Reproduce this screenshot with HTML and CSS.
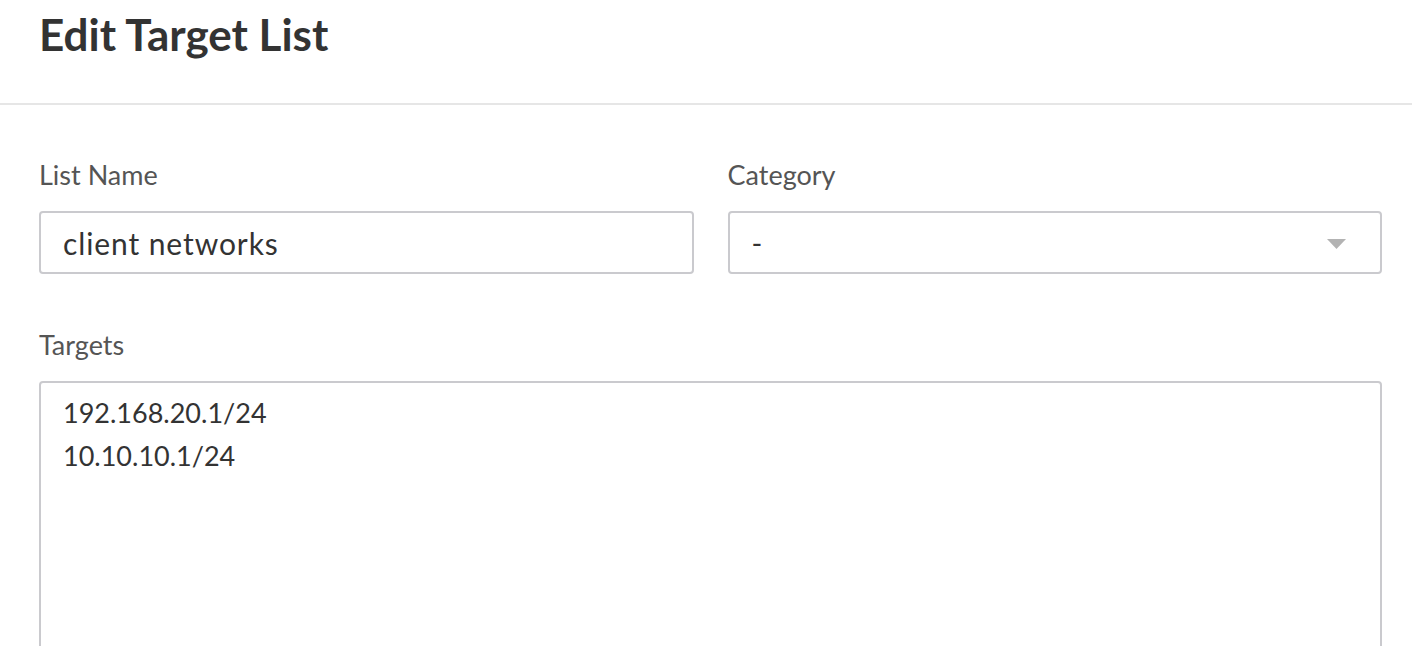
FILE: index.html
```html
<!DOCTYPE html>
<html lang="en">
<head>
<meta charset="utf-8">
<title>Edit Target List</title>
<link rel="stylesheet" href="styles.css">
</head>
<body>
<header class="page-header">
  <h1 class="page-title">Edit Target List</h1>
</header>
<form class="form">
  <div class="form-row">
    <div class="form-group">
      <label class="form-label" for="list-name">List Name</label>
      <input class="form-input" id="list-name" type="text" value="client networks">
    </div>
    <div class="form-group">
      <label class="form-label" for="category">Category</label>
      <div class="select" id="category">
        <span class="select-value">-</span>
        <svg class="select-arrow" width="19" height="10" viewBox="0 0 19 10"><path d="M0 0 H19 L9.5 10 Z" fill="#b3b3b3"/></svg>
      </div>
    </div>
  </div>
  <div class="form-group">
    <label class="form-label" for="targets">Targets</label>
    <textarea class="form-textarea" id="targets">192.168.20.1/24
10.10.10.1/24</textarea>
  </div>
</form>
</body>
</html>
```

FILE: styles.css
```css
* { box-sizing: border-box; }
html, body {
  margin: 0;
  padding: 0;
  background: #fff;
  font-family: Lato, "Open Sans", sans-serif;
  overflow: hidden;
}
.page-header {
  height: 105px;
  padding: 12px 0 0 39px;
  border-bottom: 2px solid #e6e6e6;
}
.page-title {
  margin: 0;
  font-size: 44px;
  line-height: 1;
  font-weight: 700;
  color: #333;
}
.form {
  padding: 54px 30px 0 39px;
}
.form-row {
  display: grid;
  grid-template-columns: 1fr 1fr;
  column-gap: 34px;
}
.form-group {
  display: flex;
  flex-direction: column;
  margin-bottom: 55px;
}
.form-label {
  font-size: 27px;
  line-height: 32px;
  color: #555;
  margin-bottom: 20px;
}
.form-input,
.select,
.form-textarea {
  border: 2px solid #cacace;
  border-radius: 4px;
  background: #fff;
  font-family: Lato, "Open Sans", sans-serif;
  color: #333;
  outline: none;
}
.form-input {
  height: 63px;
  padding: 0 22px;
  font-size: 30px;
  letter-spacing: 0.9px;
}
.select {
  height: 63px;
  padding: 0 34px 0 22px;
  display: flex;
  align-items: center;
  justify-content: space-between;
  font-size: 29px;
}
.select-value { color: #333; }
.select-arrow { display: block; margin-top: 2px; }
.form-textarea {
  height: 320px;
  padding: 8px 22px;
  font-size: 27px;
  line-height: 43px;
  resize: none;
}
```
